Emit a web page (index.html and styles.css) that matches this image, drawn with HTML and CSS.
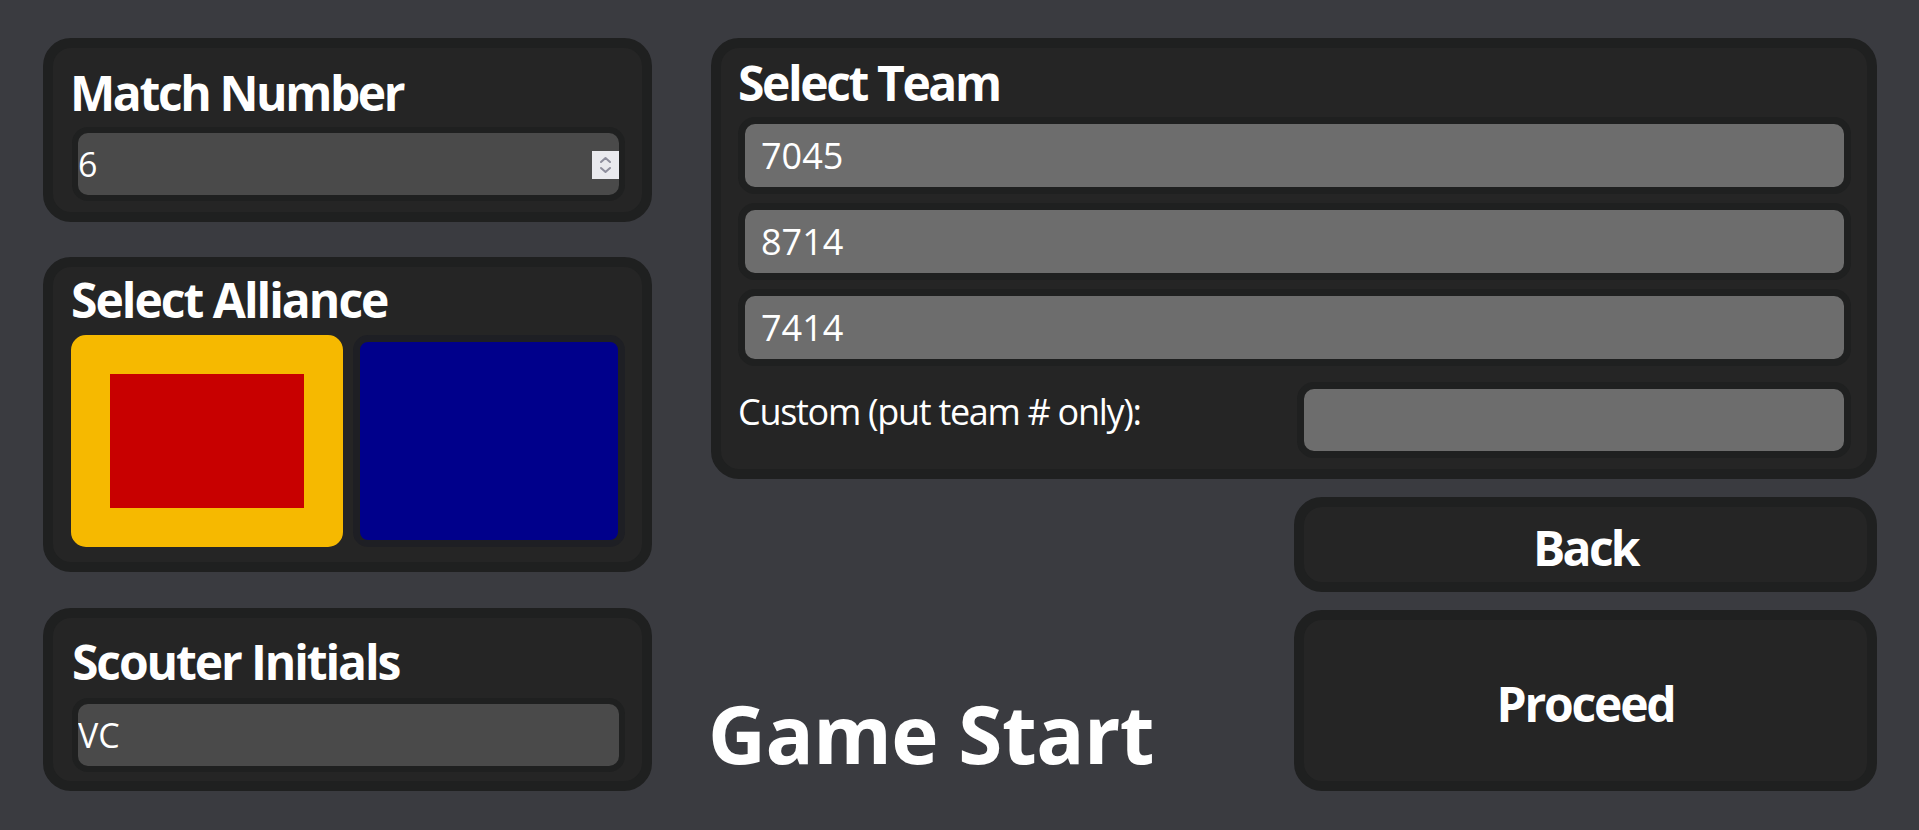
FILE: index.html
```html
<!DOCTYPE html>
<html lang="en">
<head>
<meta charset="utf-8">
<title>Game Start</title>
<link rel="stylesheet" href="styles.css">
</head>
<body>
<div class="page">
  <div class="left">
    <section class="card card-match">
      <h2 class="card-title">Match Number</h2>
      <div class="field field-dark">
        <input class="field-input" type="text" value="6">
        <span class="spinner">
          <svg width="27" height="28" viewBox="0 0 27 28">
            <path d="M9 11 L13.5 7 L18 11" fill="none" stroke="#8e8e9c" stroke-width="2" stroke-linecap="round" stroke-linejoin="round"/>
            <path d="M9 17 L13.5 21 L18 17" fill="none" stroke="#8e8e9c" stroke-width="2" stroke-linecap="round" stroke-linejoin="round"/>
          </svg>
        </span>
      </div>
    </section>
    <section class="card card-alliance">
      <h2 class="card-title">Select Alliance</h2>
      <div class="alliance-row">
        <button class="alliance alliance-red selected" type="button" aria-label="Red alliance"></button>
        <button class="alliance alliance-blue" type="button" aria-label="Blue alliance"></button>
      </div>
    </section>
    <section class="card card-scouter">
      <h2 class="card-title">Scouter Initials</h2>
      <div class="field field-dark">
        <input class="field-input" type="text" value="VC">
      </div>
    </section>
  </div>
  <div class="right">
    <section class="card card-team">
      <h2 class="card-title">Select Team</h2>
      <div class="team-list">
        <input class="team-input" type="text" value="7045" readonly>
        <input class="team-input" type="text" value="8714" readonly>
        <input class="team-input" type="text" value="7414" readonly>
      </div>
      <div class="custom-row">
        <label class="custom-label" for="custom">Custom (put team # only):</label>
        <input class="team-input custom-input" id="custom" type="text" value="">
      </div>
    </section>
    <h1 class="game-title">Game Start</h1>
    <button class="action action-back" type="button">Back</button>
    <button class="action action-proceed" type="button">Proceed</button>
  </div>
</div>
</body>
</html>
```
FILE: styles.css
```css
html, body {
  margin: 0;
  padding: 0;
}

body {
  background: #3a3b40;
  color: #ffffff;
  font-family: "Open Sans", "Noto Sans", sans-serif;
  width: 1919px;
  height: 830px;
  overflow: hidden;
}

.page {
  box-sizing: border-box;
  height: 830px;
  padding: 38px 42px 39px 43px;
  display: grid;
  grid-template-columns: 609px 1fr;
  column-gap: 59px;
}

.left {
  display: flex;
  flex-direction: column;
}

.card {
  box-sizing: border-box;
  background: #252525;
  border: 10px solid #1f2020;
  border-radius: 28px;
}

.card-title {
  margin: 0;
  font-size: 48px;
  line-height: 48px;
  font-weight: 700;
  letter-spacing: -2.4px;
  color: #ffffff;
}

.card-match {
  height: 184px;
  padding: 21px 17px 11px 19px;
}

.card-match .card-title {
  margin-left: -2px;
}

.card-match .field {
  margin-top: 10px;
}

.card-alliance {
  height: 315px;
  margin-top: 35px;
  padding: 9px 17px 15px 18px;
}

.card-alliance .card-title {
  letter-spacing: -2px;
}

.card-scouter {
  height: 183px;
  margin-top: 36px;
  padding: 20px 17px 9px 19px;
}

.card-scouter .card-title {
  letter-spacing: -2.1px;
}

.card-scouter .field {
  margin-top: 12px;
}

.field {
  box-sizing: border-box;
  height: 74px;
  border: 6px solid #1f2020;
  border-radius: 16px;
  display: flex;
  align-items: center;
  overflow: hidden;
}

.field-dark {
  background: #4a4a4a;
}

.field-input {
  flex: 1;
  min-width: 0;
  height: 100%;
  border: 0;
  outline: none;
  background: transparent;
  color: #ffffff;
  font-family: "Open Sans", "Noto Sans", sans-serif;
  font-size: 34px;
  padding: 0;
  margin: 0;
}

.spinner {
  display: flex;
  width: 27px;
  height: 28px;
  background: #e9e9ed;
  margin-top: 2px;
}

.alliance-row {
  margin-top: 11px;
  display: grid;
  grid-template-columns: 1fr 1fr;
  column-gap: 10px;
  height: 212px;
}

.alliance {
  box-sizing: border-box;
  height: 212px;
  margin: 0;
  padding: 0;
  border-radius: 15px;
  cursor: pointer;
}

.alliance-red {
  background: #c80000;
  border: 7px solid #1f2021;
}

.alliance-red.selected {
  border: 39px solid #f6b900;
}

.alliance-blue {
  background: #00008b;
  border: 7px solid #1e1f24;
}

.right {
  display: grid;
  grid-template-columns: 1fr 1fr;
  grid-template-rows: 441px 95px 181px;
  row-gap: 18px;
}

.card-team {
  grid-column: 1 / -1;
  grid-row: 1;
  padding: 11px 16px 11px 17px;
}

.team-list {
  margin-top: 10px;
  display: flex;
  flex-direction: column;
  row-gap: 9px;
}

.team-input {
  box-sizing: border-box;
  display: block;
  width: 100%;
  height: 77px;
  margin: 0;
  border: 7px solid #1f2020;
  border-radius: 17px;
  background: #6d6d6d;
  color: #ffffff;
  font-family: "Open Sans", "Noto Sans", sans-serif;
  font-size: 36px;
  padding: 0 0 0 16px;
  outline: none;
}

.custom-row {
  margin-top: 16px;
  display: grid;
  grid-template-columns: 1fr 1fr;
  align-items: start;
}

.custom-label {
  font-size: 36px;
  line-height: 49px;
  letter-spacing: -1.3px;
  color: #ffffff;
  padding-top: 5px;
}

.custom-input {
  height: 76px;
  margin-left: 2px;
  width: calc(100% - 2px);
}

.game-title {
  grid-column: 1;
  grid-row: 2 / 4;
  align-self: end;
  margin: 0 0 18px -3px;
  font-size: 80px;
  line-height: 80px;
  font-weight: 700;
  letter-spacing: -0.5px;
  color: #ffffff;
}

.action {
  box-sizing: border-box;
  grid-column: 2;
  margin: 0;
  padding: 6px 0 0 0;
  background: #252525;
  border: 10px solid #1f2020;
  border-radius: 28px;
  color: #ffffff;
  font-family: "Open Sans", "Noto Sans", sans-serif;
  font-size: 48px;
  font-weight: 700;
  letter-spacing: -2.2px;
  cursor: pointer;
}

.action-back {
  grid-row: 2;
  letter-spacing: -2.7px;
}

.action-proceed {
  grid-row: 3;
}
```
